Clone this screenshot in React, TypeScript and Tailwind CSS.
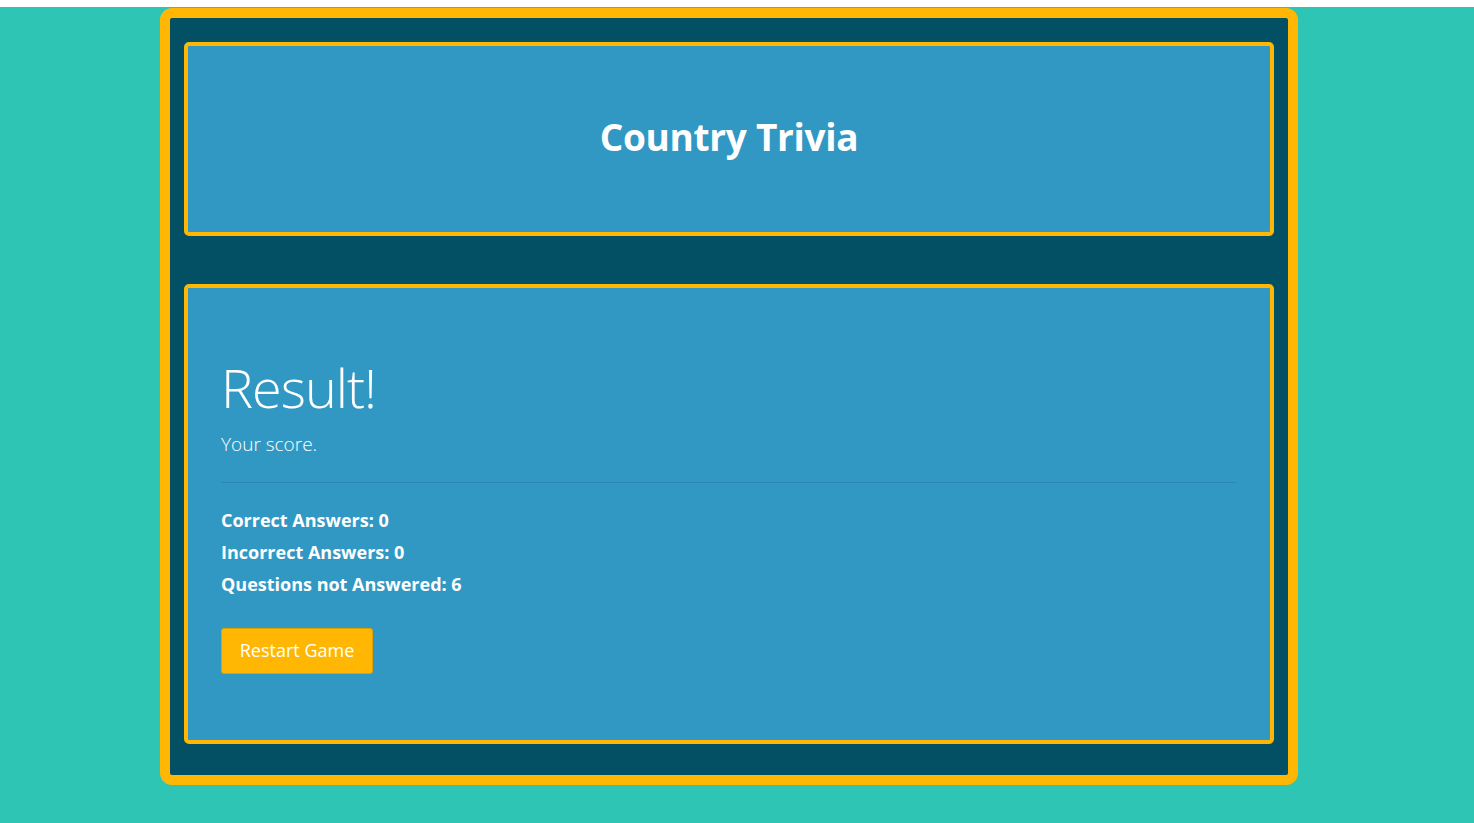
import React from 'react';

const stats = [
  { label: 'Correct Answers', value: 0 },
  { label: 'Incorrect Answers', value: 0 },
  { label: 'Questions not Answered', value: 6 },
];

export default function App() {
  return (
    <div className="min-h-[823px] bg-[#2ec5b5] text-white" style={{ fontFamily: '"Open Sans", "Noto Sans", sans-serif' }}>
      <div className="h-[7px] bg-white" />
      <div className="pt-[1px] pb-[38px]">
        {/* Game frame */}
        <div className="ml-[160px] w-[1138px] rounded-[12px] border-[10px] border-[#ffb703] bg-[#034f64] px-[14px] pt-[24px] pb-[31px]">
          {/* Header */}
          <div className="flex h-[194px] items-center justify-center rounded-[5px] border-4 border-[#ffb703] bg-[#3198c4] pb-[4px]">
            <h1 className="text-[37px] font-bold tracking-[-0.3px]">Country Trivia</h1>
          </div>

          {/* Result card */}
          <div className="mt-[48px] h-[460px] rounded-[5px] border-4 border-[#ffb703] bg-[#3198c4] px-[33px] pt-[64px]">
            <h2 className="text-[54px] font-light leading-[70px] tracking-[-1px]">Result!</h2>
            <p className="mt-[8px] text-[19px] font-light">Your score.</p>
            <hr className="mt-[23px] mr-[1px] border-t border-[#2a88b3]" />
            <div className="mt-[24px] flex flex-col gap-[6px]">
              {stats.map((s) => (
                <div key={s.label} className="text-[18px] font-bold leading-[26px]">
                  {s.label}: {s.value}
                </div>
              ))}
            </div>
            <button className="mt-[31px] h-[46px] w-[152px] rounded-[3px] border border-[#e0a000] bg-[#ffb703] text-[18px] font-normal text-white">
              Restart Game
            </button>
          </div>
        </div>
      </div>
    </div>
  );
}
